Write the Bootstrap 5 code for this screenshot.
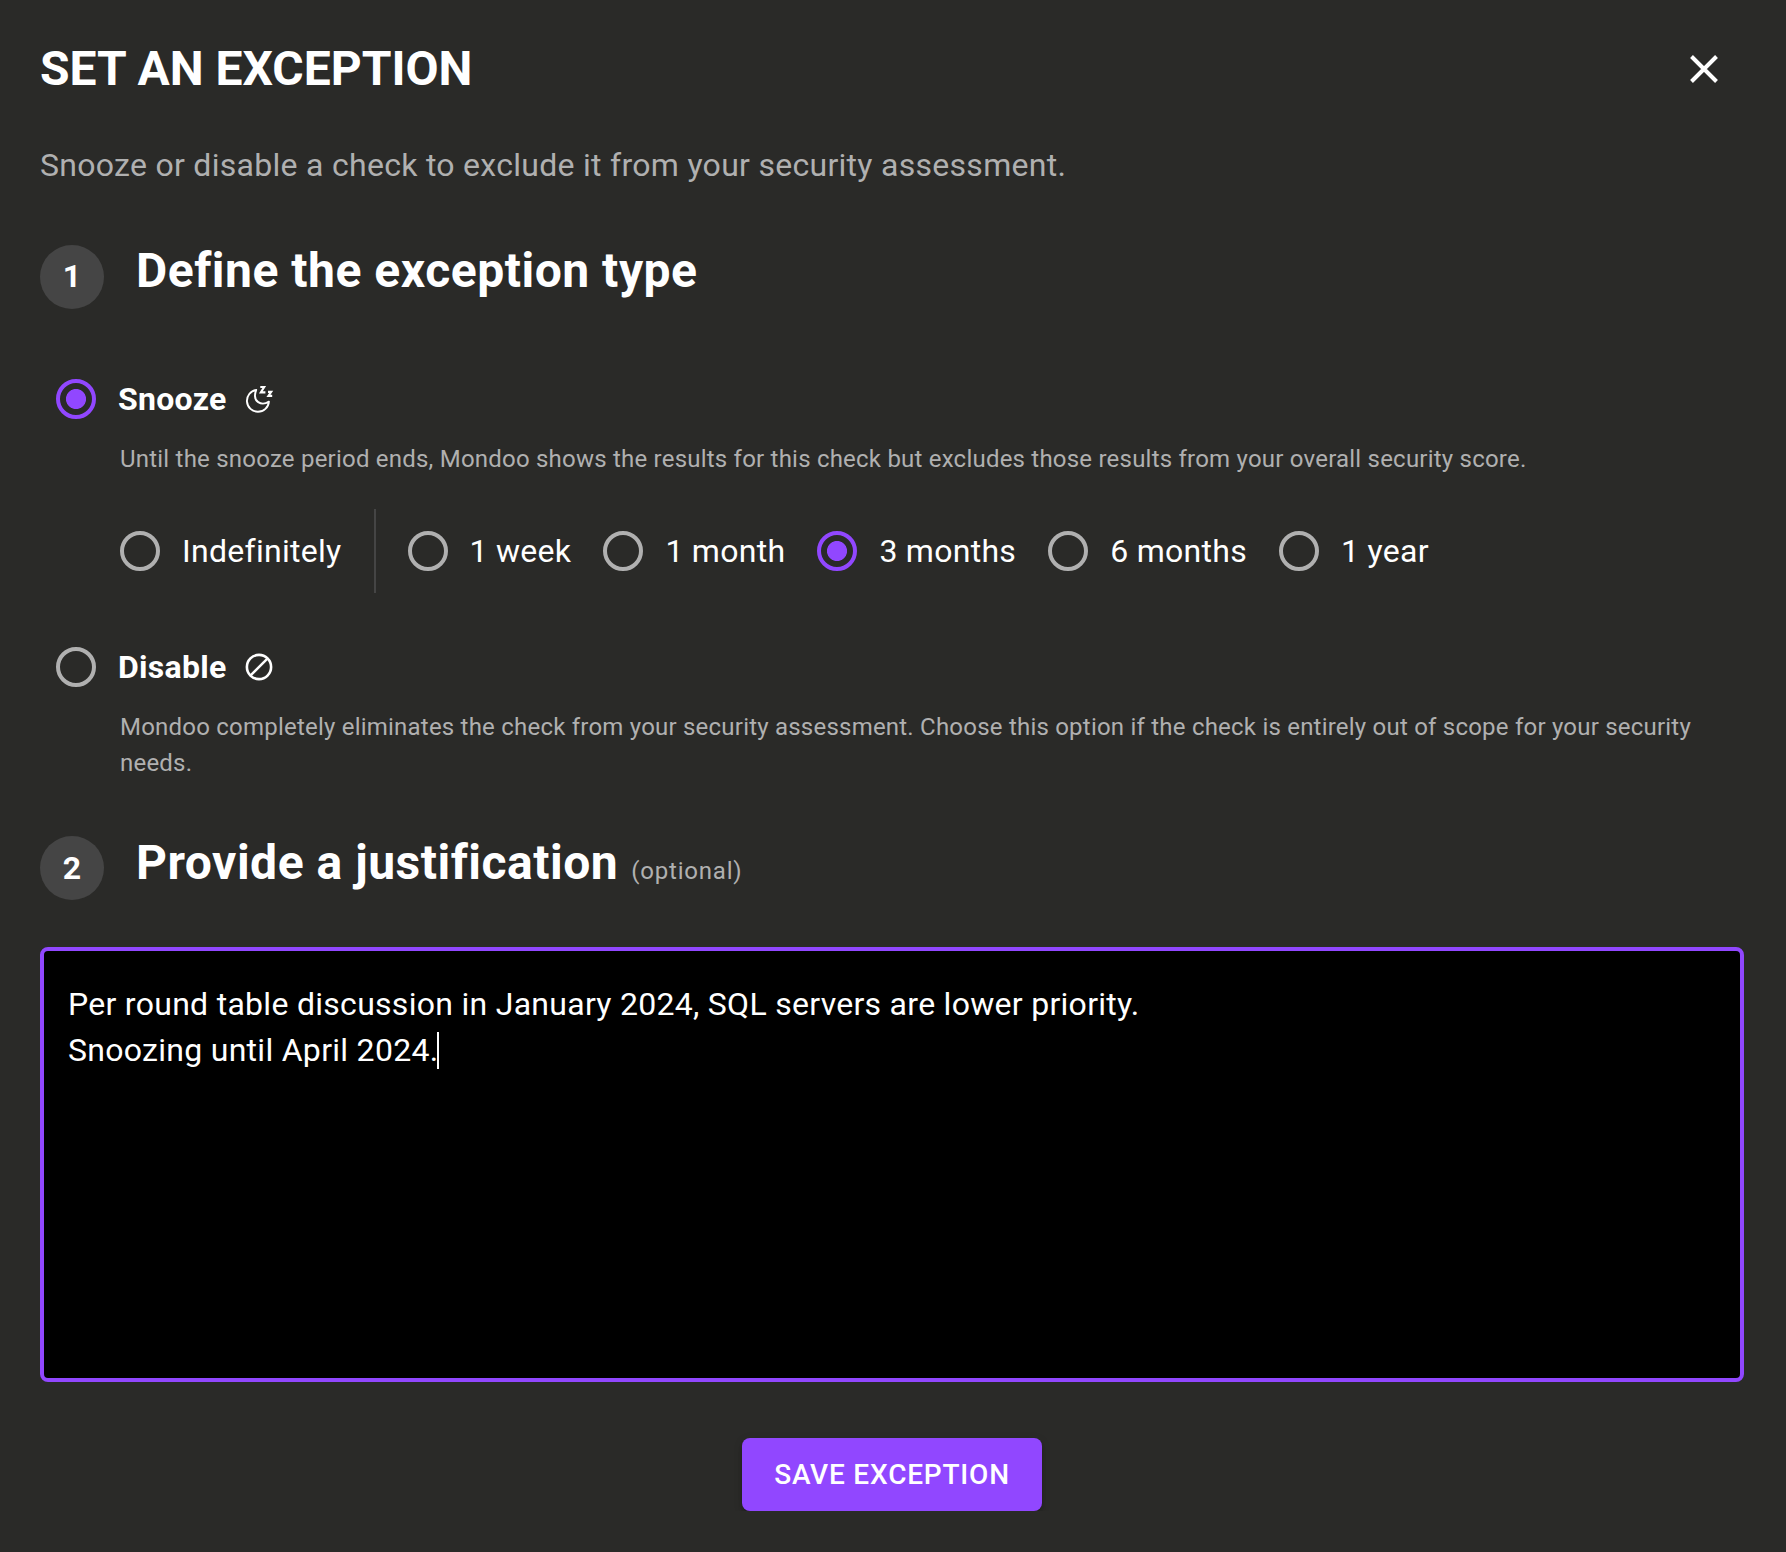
<!DOCTYPE html>
<html lang="en">
<head>
<meta charset="utf-8">
<meta name="viewport" content="width=device-width, initial-scale=1">
<title>Set an exception</title>
<link href="https://cdn.jsdelivr.net/npm/bootstrap@5.3.0/dist/css/bootstrap.min.css" rel="stylesheet">
<style>
:root{--violet:#9147ff;--muted:#b0b0b0}
body{background:#2a2a28;color:#fff;font-family:Roboto,sans-serif;font-size:32px;line-height:48px;letter-spacing:.285px}
.dialog-box{padding:41px 42px 0 40px}
.dialog-title,.step-title{font-size:48px;font-weight:700;line-height:56px;margin:0}
.dialog-title{letter-spacing:0}
.step-title{letter-spacing:.51px}
.soft{color:var(--muted)}
.intro{margin:44px 0 54px}
.close-x{margin-right:18px;padding:0;border:0;background:none;line-height:0;color:#fff}
.step{gap:32px}
.step-dot{width:64px;height:64px;margin-top:2px;padding-bottom:2px;border-radius:50%;background:#454545;font-weight:700}
.step-two{margin-top:54px}
.step-two .step-dot{margin-top:1px;padding-bottom:0}
.optional{font-size:24px;letter-spacing:.8px;margin-left:13px}
.choice{height:84px;cursor:pointer}
.choice .form-check-input{width:40px;height:40px;margin:0 22px;border:4px solid var(--muted);background-color:transparent;flex:none}
.choice .form-check-input:checked{border-color:var(--violet);background-image:radial-gradient(circle,var(--violet) 9.6px,transparent 10.4px);background-size:auto;background-origin:border-box}
.choice .form-check-input:focus{box-shadow:none}
.main-choice{margin-left:-6px;font-weight:700}
.main-choice svg{margin-left:16px}
.hint{font-size:24px;line-height:36px;letter-spacing:.217px;margin:0 0 0 80px}
.periods{margin:32px 0 32px 58px}
.periods .choice + .choice{margin-left:10px}
.rule{width:2px;height:84px;background:#454545;margin:0 10px 0 32px}
.note{height:435px;margin-top:47px;padding:30px 24px;border:4px solid var(--violet);border-radius:8px;background:#000;line-height:46px;outline:0}
.caret{display:inline-block;width:2px;height:37px;margin-left:-1px;background:#fff;vertical-align:-7.5px}
.save-btn{--bs-btn-bg:var(--violet);--bs-btn-hover-bg:#7f35ef;--bs-btn-color:#fff;--bs-btn-hover-color:#fff;width:300px;height:73px;margin-top:56px;padding:0;border:0;border-radius:8px;font-size:28px;font-weight:500;letter-spacing:.8px;box-shadow:0 6px 2px -4px rgba(0,0,0,.2),0 4px 4px rgba(0,0,0,.14),0 2px 10px rgba(0,0,0,.12)}
</style>
</head>
<body>
<main class="dialog-box">
  <header class="d-flex justify-content-between align-items-center">
    <h1 class="dialog-title">SET AN EXCEPTION</h1>
    <button class="close-x" type="button" aria-label="Close">
      <svg width="44" height="48" viewBox="0 0 44 48" fill="none" stroke="currentColor" stroke-width="4"><path d="M9.5 11.5 34.5 36.5M34.5 11.5 9.5 36.5"/></svg>
    </button>
  </header>
  <p class="intro soft">Snooze or disable a check to exclude it from your security assessment.</p>

  <div class="step d-flex align-items-start mb-5">
    <span class="step-dot d-flex align-items-center justify-content-center">1</span>
    <h2 class="step-title">Define the exception type</h2>
  </div>

  <label class="choice main-choice d-flex align-items-center">
    <input class="form-check-input" type="radio" name="kind" checked>Snooze
    <svg width="32" height="32" viewBox="0 0 32 32" fill="none" stroke="#fff" stroke-width="1.9"><path d="M13.2 6.9A11 11 0 1 0 25.9 18.6C19 23 8.5 19.5 13.2 6.9Z" stroke-linejoin="round"/><path d="M17.3 4H21.2L17.8 9.4H22.4M25 8.9H28.2L25.4 12.9H29.2" stroke-width="2.1"/></svg>
  </label>
  <p class="hint soft">Until the snooze period ends, Mondoo shows the results for this check but excludes those results from your overall security score.</p>

  <div class="periods d-flex">
    <label class="choice d-flex align-items-center"><input class="form-check-input" type="radio" name="period">Indefinitely</label>
    <span class="rule"></span>
    <label class="choice d-flex align-items-center"><input class="form-check-input" type="radio" name="period">1 week</label>
    <label class="choice d-flex align-items-center"><input class="form-check-input" type="radio" name="period">1 month</label>
    <label class="choice d-flex align-items-center"><input class="form-check-input" type="radio" name="period" checked>3 months</label>
    <label class="choice d-flex align-items-center"><input class="form-check-input" type="radio" name="period">6 months</label>
    <label class="choice d-flex align-items-center"><input class="form-check-input" type="radio" name="period">1 year</label>
  </div>

  <label class="choice main-choice d-flex align-items-center">
    <input class="form-check-input" type="radio" name="kind">Disable
    <svg width="32" height="32" viewBox="0 0 32 32" fill="none" stroke="#fff"><circle cx="16" cy="16" r="12.1" stroke-width="2.6"/><path d="M7.6 24.4 24.4 7.6" stroke-width="2.4"/></svg>
  </label>
  <p class="hint soft">Mondoo completely eliminates the check from your security assessment. Choose this option if the check is entirely out of scope for your security needs.</p>

  <div class="step step-two d-flex align-items-start">
    <span class="step-dot d-flex align-items-center justify-content-center">2</span>
    <h2 class="step-title d-flex align-items-baseline">Provide a justification<small class="optional soft fw-normal">(optional)</small></h2>
  </div>

  <div class="note" role="textbox" aria-multiline="true">Per round table discussion in January 2024, SQL servers are lower priority.<br>Snoozing until April 2024.<span class="caret"></span></div>

  <div class="d-flex justify-content-center">
    <button class="btn save-btn" type="button">SAVE EXCEPTION</button>
  </div>
</main>
<script src="https://cdn.jsdelivr.net/npm/bootstrap@5.3.0/dist/js/bootstrap.bundle.min.js"></script>
</body>
</html>
